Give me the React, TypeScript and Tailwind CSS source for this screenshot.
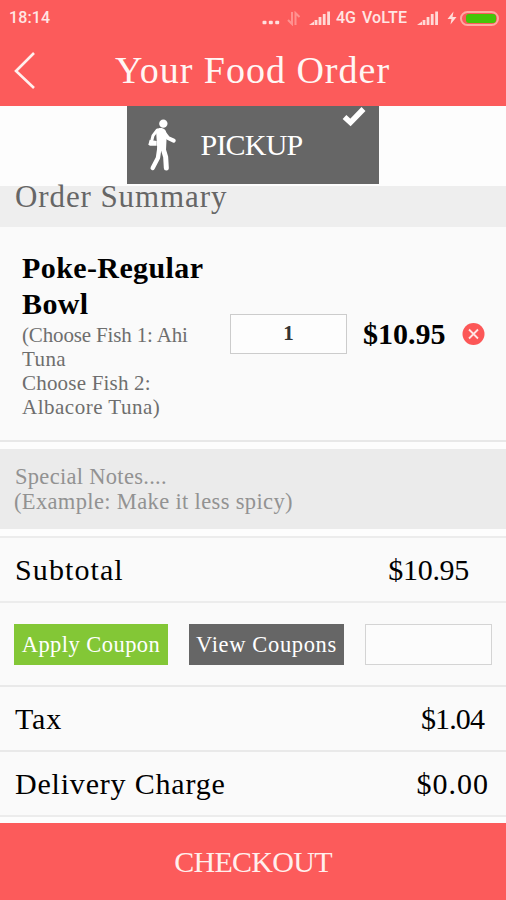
const TOTALS = [
  { label: "Tax", amount: "$1.04", labelClass: "tracking-[0.8px]", amountClass: "mr-[22px] tracking-[-0.9px]" },
  { label: "Delivery Charge", amount: "$0.00", labelClass: "tracking-[0.8px]", amountClass: "mr-[17px] tracking-[1px]" },
];

function SignalIcon() {
  return (
    <svg width="22" height="15" viewBox="0 0 22 15" fill="#ffd9d6">
      <path d="M0 14 5 10.5V14z" />
      <rect x="5.6" y="9" width="2.8" height="5" />
      <rect x="9.6" y="6" width="2.8" height="8" />
      <rect x="13.8" y="3" width="2.8" height="11" />
      <rect x="18.2" y="0.5" width="2.8" height="13.5" />
    </svg>
  );
}

function StatusBar() {
  return (
    <div className="flex h-9 items-center pl-[9px] pr-[7px] font-['Roboto'] text-[16px] font-medium text-[#ffe6e4]">
      <span className="tracking-[0.1px]">18:14</span>
      <div className="ml-auto flex items-center">
        <svg width="18" height="15" viewBox="0 0 18 15" fill="#ffe0de">
          <rect x="0.5" y="9.8" width="4" height="3.4" rx="1" />
          <rect x="6.8" y="9.8" width="4" height="3.4" rx="1" />
          <rect x="13.2" y="9.8" width="4" height="3.4" rx="1" />
        </svg>
        <svg className="ml-[7px]" width="13" height="15" viewBox="0 0 13 15" fill="none" stroke="#ff918f" strokeWidth="2">
          <path d="M5 1v12L1 9M8.5 14V2l4 4" />
        </svg>
        <div className="ml-[9px]">
          <SignalIcon />
        </div>
        <span className="ml-[5px] w-[26px]">4G</span>
        <span className="w-[49px] whitespace-nowrap tracking-[0.1px]">VoLTE</span>
        <div className="ml-[6px]">
          <SignalIcon />
        </div>
        <svg className="ml-[8px]" width="10" height="14" viewBox="0 0 10 14" fill="#ffdcd9">
          <path d="M6.5 0.5 0.5 8h4L3.5 13.5 9.5 6h-4z" />
        </svg>
        <div className="ml-[3px] h-[15px] w-[39px] rounded-full border-2 border-[#ffaaa3] pl-[4px] pt-[1px]">
          <div className="h-[9px] w-[30px] rounded-[3px] bg-[#45c508]" />
        </div>
      </div>
    </div>
  );
}

function WalkerIcon() {
  return (
    <svg width="28" height="52" viewBox="0 0 84 156" fill="none" stroke="#fff" strokeLinecap="round" strokeLinejoin="round">
      <circle cx="46" cy="14" r="12.5" fill="#fff" stroke="none" />
      <path d="M24 32c8-7 20-7 27 0 4 5 5 12 5 20l-2 42H28l-2-32z" fill="#fff" stroke="none" />
      <path d="M28 33 15 50 12 62" strokeWidth="9" />
      <path d="M5 62 26 66v14L6 80 1 77z" fill="#fff" stroke="none" />
      <path d="M50 44 60 57 77 65" strokeWidth="12" />
      <path d="M34 88 30 116 14 147" strokeWidth="13" />
      <path d="M45 88 53 114 55 147" strokeWidth="15" />
    </svg>
  );
}

export default function App() {
  return (
    <div className="flex h-[900px] w-[506px] flex-col overflow-hidden bg-[#fafafa] font-['Liberation_Serif',serif] text-black">
      <header className="h-[106px] shrink-0 bg-[#fc5b5b]">
        <StatusBar />
        <div className="flex h-[68px] items-center">
          <svg className="mt-px ml-[13px] shrink-0" width="24" height="40" viewBox="0 0 24 40" fill="none" stroke="#fff0ee" strokeWidth="2.6">
            <path d="M21 2 3 20 21 37" />
          </svg>
          <h1 className="ml-[78px] whitespace-nowrap text-[38px] leading-none tracking-[1px] text-[#fff6f4]">
            Your Food Order
          </h1>
        </div>
      </header>

      <div className="flex h-[80px] shrink-0 justify-center bg-[#fdfdfd]">
        <button className="relative mr-[1px] flex h-[78px] w-[252px] items-center bg-[#666] pl-[21px] text-white">
          <WalkerIcon />
          <span className="ml-[25px] text-[30px] leading-none tracking-[-0.8px]">PICKUP</span>
          <svg className="absolute right-[13px] top-px" width="24" height="20" viewBox="0 0 24 20" fill="none" stroke="#fff" strokeWidth="5.5">
            <path d="M2.5 10 8.5 15.5 21.5 2" />
          </svg>
        </button>
      </div>

      <div className="h-[41px] shrink-0 bg-[#eee] pl-[15px]">
        <h2 className="text-[31px] leading-[22px] tracking-[0.9px] text-[#666]">Order Summary</h2>
      </div>

      <section className="flex h-[213px] shrink-0 pt-[23px]">
        <div className="w-[209px] pl-[22px]">
          <p className="whitespace-nowrap text-[30px] font-bold leading-[36px] tracking-[0.4px]">
            Poke-Regular
            <br />
            Bowl
          </p>
          <div className="mt-px whitespace-nowrap text-[21px] leading-[24px] text-[#6e6e6e]">
            <p className="tracking-[-0.15px]">(Choose Fish 1: Ahi</p>
            <p className="tracking-[0.4px]">Tuna</p>
            <p className="tracking-[0.2px]">Choose Fish 2:</p>
            <p className="tracking-[0.5px]">Albacore Tuna)</p>
          </div>
        </div>
        <div className="ml-[21px] mt-[64px] flex h-[40px] items-center">
          <div className="grid h-[40px] w-[117px] place-items-center border-[1.5px] border-[#ccc] bg-[#fdfdfd] text-[21px] font-bold text-[#333]">
            1
          </div>
          <span className="-mt-[2px] ml-[16px] w-[84px] text-[30px] font-bold">$10.95</span>
          <svg className="ml-[15px]" width="23" height="23" viewBox="0 0 23 23">
            <circle cx="11.5" cy="11" r="11" fill="#fc5757" />
            <path d="M7 6.5 16 15.5M16 6.5 7 15.5" stroke="#ffe6e4" strokeWidth="1.8" />
          </svg>
        </div>
      </section>

      <div className="h-[9px] shrink-0 border-t-2 border-[#e8e8e8] bg-[#fdfdfd]" />
      <div className="h-[80px] shrink-0 whitespace-nowrap bg-[#ebebeb] pl-[15px] pt-[15px] text-[22.5px] leading-[25px] text-[#929292]">
        <p className="tracking-[0.3px]">Special Notes....</p>
        <p className="-ml-px tracking-[0.35px]">(Example: Make it less spicy)</p>
      </div>
      <div className="h-[7px] shrink-0 bg-[#fdfdfd]" />

      <div className="flex h-[65px] shrink-0 items-center justify-between border-t-2 border-[#ececec] pl-[15px] text-[30px]">
        <span className="tracking-[1.1px]">Subtotal</span>
        <span className="mr-[37px] tracking-[-0.3px]">$10.95</span>
      </div>

      <div className="flex h-[84px] shrink-0 items-center border-t-2 border-[#ececec] pl-[14px] text-[22.5px] text-white">
        <button className="h-[41px] w-[154px] whitespace-nowrap bg-[#83c736] pt-[2px] tracking-[0.45px]">Apply Coupon</button>
        <button className="ml-[21px] h-[41px] w-[155px] whitespace-nowrap bg-[#666] pt-[2px] tracking-[0.65px]">
          View Coupons
        </button>
        <div className="ml-[21px] h-[41px] w-[127px] border-[1.5px] border-[#d4d4d4] bg-[#fcfcfc]" />
      </div>

      {TOTALS.map((row) => (
        <div
          key={row.label}
          className="flex h-[65px] shrink-0 items-center justify-between border-t-2 border-[#e9e9e9] pb-px pl-[15px] text-[30px]"
        >
          <span className={row.labelClass}>{row.label}</span>
          <span className={row.amountClass}>{row.amount}</span>
        </div>
      ))}

      <div className="h-[8px] shrink-0 border-t-2 border-[#ececec] bg-[#fdfdfd]" />
      <button className="h-[77px] shrink-0 bg-[#fc5b5b] text-[30px] tracking-[-0.7px] text-[#ffefed]">CHECKOUT</button>
    </div>
  );
}
